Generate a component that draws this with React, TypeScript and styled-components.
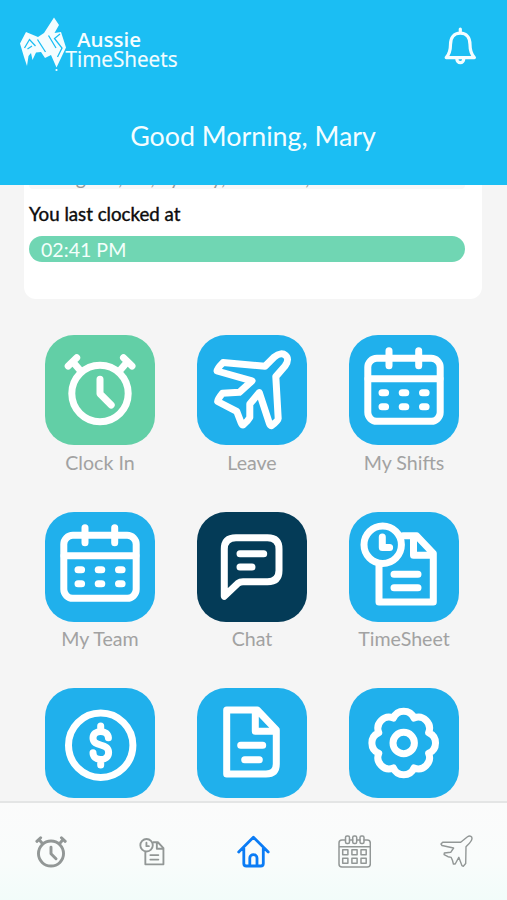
import React from "react";
import styled, { createGlobalStyle } from "styled-components";

const GlobalStyle = createGlobalStyle`
  * { box-sizing: border-box; }
  body { margin: 0; font-family: Lato, "Liberation Sans", sans-serif; background: #f5f5f5; }
`;

const Screen = styled.div`
  width: 507px;
  height: 900px;
  display: flex;
  flex-direction: column;
  overflow: hidden;
  background: #f5f5f5;
`;

const Header = styled.header`
  flex: none;
  height: 185px;
  background: #1bbef3;
  color: #f4fdff;
`;

const Brand = styled.div`
  display: flex;
  justify-content: space-between;
  align-items: flex-start;
  padding: 15px 30px 0 20px;
  height: 117px;
`;

const Logo = styled.svg`
  display: block;
  width: 162px;
  height: 60px;
`;

const BellIcon = styled.svg`
  display: block;
  width: 33px;
  height: 38px;
  margin-top: 12px;
  fill: none;
  stroke: #f4fdff;
  stroke-width: 3.2;
  stroke-linejoin: round;
  stroke-linecap: round;
`;

const Greeting = styled.h1`
  margin: 0;
  padding-right: 1px;
  font-size: 26.8px;
  line-height: 38px;
  font-weight: 400;
  text-align: center;
  white-space: nowrap;
`;

const Content = styled.main`
  flex: 1;
  min-height: 0;
  overflow: hidden;
`;

const Card = styled.section`
  height: 114px;
  margin: 0 25px 0 24px;
  padding: 0 17px 0 5px;
  background: #fff;
  border-radius: 0 0 12px 12px;
  overflow: hidden;
  display: flex;
  flex-direction: column;
`;

const Address = styled.div`
  height: 4px;
  padding-left: 11px;
  display: flex;
  align-items: flex-end;
  background: #f8f8f8;
  border-radius: 0 0 12px 12px;
  overflow: hidden;
  color: #999;
  font-size: 19.6px;
  line-height: 23px;
  white-space: pre;
`;

const CardTitle = styled.div`
  margin-top: 13px;
  height: 24px;
  font-size: 18.7px;
  line-height: 25px;
  font-weight: 400;
  color: #0c0c0c;
  -webkit-text-stroke: 0.4px #0c0c0c;
`;

const TimePill = styled.div`
  margin-top: 10px;
  height: 26px;
  padding-left: 12px;
  border-radius: 13px;
  background: #70d6b3;
  color: #f4fffb;
  font-size: 19.6px;
  line-height: 28px;
`;

const Grid = styled.div`
  display: grid;
  grid-template-columns: repeat(3, 152px);
  grid-auto-rows: 176.3px;
  justify-content: center;
  padding: 36.4px 4px 0 0;
  margin-left: 1px;
`;

const Cell = styled.div`
  display: flex;
  flex-direction: column;
  align-items: center;
`;

const Tile = styled.div<{ $color: string }>`
  width: 110px;
  height: 110px;
  border-radius: 29px;
  background: ${(p) => p.$color};
`;

const Glyph = styled.svg`
  display: block;
  width: 110px;
  height: 110px;
  fill: none;
  stroke: #fff;
  stroke-width: 7;
  stroke-linecap: round;
  stroke-linejoin: round;
`;

const Label = styled.div`
  margin-top: 5.2px;
  color: #a2a2a2;
  font-size: 19.6px;
  line-height: 24px;
`;

const NavBar = styled.nav`
  flex: none;
  height: 99px;
  display: grid;
  grid-template-columns: repeat(5, 1fr);
  align-items: center;
  justify-items: center;
  border-top: 2px solid #e4e5e5;
  background: linear-gradient(#fbfbfb, #f9fcfb 60%, #f2fcfa);
`;

const NavIcon = styled.svg<{ $weight: number; $active?: boolean }>`
  display: block;
  fill: none;
  stroke: ${(p) => (p.$active ? "#0b7cf5" : "#929796")};
  stroke-width: ${(p) => p.$weight};
  stroke-linecap: round;
  stroke-linejoin: round;
`;

const ClockShape = () => (
  <>
    <circle cx="55" cy="58.5" r="28.2" />
    <path d="M55 44.2V58.8L66.2 70M23.2 31L31.7 22.8M28.4 27.5L35.7 36M87 31L78.5 22.8M81.8 27.5L74.5 36" />
  </>
);

const PlaneShape = () => (
  <path d="M26 27.6L68 31.3L77.5 21.8C86 14.5 95 22 88 31L78.8 41.6L81.2 83.5Q81 86 74.5 90.6Q73.3 91 72.4 88.3L62.3 57.6L52.8 69V82.5Q51 86 46 90Q45 90 44.2 88L39.7 76.3L20.6 66.5Q20 65 25.5 58.3L42.3 57.3L55 45.8L20 36Q19.8 33.8 26 27.6Z" />
);

const CalendarShape = () => (
  <>
    <rect x="18.8" y="23.3" width="72.4" height="63" rx="9" />
    <path d="M19 43.8H91M40 15.7V30.8M69.7 15.7V30.8" />
    <path d="M33 57.8H36.6M53.2 57.8H56.8M73.5 57.8H77.1M33 71.8H36.6M53.2 71.8H56.8M73.5 71.8H77.1" />
  </>
);

const ChatShape = () => (
  <>
    <path d="M27.3 84.3V37Q27.3 25.7 39 25.7H70.5Q82 25.7 82 37V58.5Q82 69.7 70.5 69.7H46Q43 69.7 41 71.3Z" />
    <path d="M43 41.7H66.7M43 55H55" />
  </>
);

const SheetShape = () => (
  <>
    <circle cx="33.7" cy="32.7" r="18.7" />
    <path d="M33.3 25V35.4H40.6" />
    <path d="M30 54V90H84.3V41.3L67.7 23.8H54M64.5 24V43.2H84.3" />
    <path d="M45 62.3H69M45 75.7H69" />
  </>
);

const DollarShape = () => (
  <>
    <circle cx="55.7" cy="57.3" r="32.2" />
    <path d="M63.4 49.8C63.2 46 60 43.4 55.7 43.4C51.3 43.4 48 46 48 50C48 59.6 63.6 54.4 63.6 64.4C63.6 68.6 60 71.5 55.7 71.5C51.3 71.5 48 68.6 48 64.7M55.7 38V43M55.7 72V77" />
  </>
);

const FileShape = () => (
  <>
    <path d="M29.7 22H60.3L79.3 42V76Q79.3 86 69 86H29.7ZM58.3 23V43.3H78" />
    <path d="M43.7 57.3H65.7M47.7 71.7H62.3" />
  </>
);

const GearShape = () => (
  <g transform="translate(54.7 55)">
    <circle r="10.7" />
    <path d="M24.94 -10.33A11.2 11.2 0 0 1 24.94 10.33A11.2 11.2 0 0 1 10.33 24.94A11.2 11.2 0 0 1 -10.33 24.94A11.2 11.2 0 0 1 -24.94 10.33A11.2 11.2 0 0 1 -24.94 -10.33A11.2 11.2 0 0 1 -10.33 -24.94A11.2 11.2 0 0 1 10.33 -24.94A11.2 11.2 0 0 1 24.94 -10.33Z" />
  </g>
);

const BLUE = "#20b0ec";

const tiles = [
  { label: "Clock In", color: "#62cfa6", Shape: ClockShape },
  { label: "Leave", color: BLUE, Shape: PlaneShape },
  { label: "My Shifts", color: BLUE, Shape: CalendarShape },
  { label: "My Team", color: BLUE, Shape: CalendarShape },
  { label: "Chat", color: "#043b57", Shape: ChatShape },
  { label: "TimeSheet", color: BLUE, Shape: SheetShape },
  { label: "", color: BLUE, Shape: DollarShape },
  { label: "", color: BLUE, Shape: FileShape },
  { label: "", color: BLUE, Shape: GearShape },
];

export default function App() {
  return (
    <Screen>
      <GlobalStyle />
      <Header>
        <Brand>
          <Logo viewBox="0 0 162 60">
            <path
              fill="#f4fdff"
              d="M0 28.5L6 17L18 22L24 18L34 2.5L39 10L34.5 18L41 17L46 32.5L36.5 52.5L31 40L25 43L21 37L16 37.5L12.5 45L11 38L8.5 41L7 51L4 42Z"
            />
            <path
              fill="none"
              stroke="#1bbef3"
              strokeWidth="1.3"
              d="M4.5 33L9.5 24.5L15.5 31M7.5 34L12 31M17.5 24.5L25.5 37M28.5 20.5L36 33M40 19L34.5 23.5L42 33L37.5 42"
            />
            <circle cx="36.5" cy="55" r="1.1" fill="#f4fdff" />
            <g fill="#f4fdff" fontFamily='"Open Sans", "Noto Sans", sans-serif'>
              <text x="57" y="31.5" fontSize="20" fontWeight="600" textLength="64" lengthAdjust="spacingAndGlyphs">Aussie</text>
              <text x="45.5" y="52" fontSize="22" textLength="112" lengthAdjust="spacingAndGlyphs" stroke="#f4fdff" strokeWidth="0.2">TimeSheets</text>
            </g>
          </Logo>
          <BellIcon viewBox="0 0 33 38">
            <path d="M2.2 30.6C5.5 27 6.5 24 6.5 17.5C6.5 10.5 10 6.2 16.3 6.2C22.5 6.2 26 10.5 26 17.5C26 24 27 27 30.4 30.6ZM16.3 2V6" />
            <path d="M12.8 31.5C12.8 37 19.8 37 19.8 31.5" />
          </BellIcon>
        </Brand>
        <Greeting>Good Morning, Mary</Greeting>
      </Header>
      <Content>
        <Card>
          <Address>Wing Sta, Rd, Sydney, Australia,</Address>
          <CardTitle>You last clocked at</CardTitle>
          <TimePill>02:41 PM</TimePill>
        </Card>
        <Grid>
          {tiles.map(({ label, color, Shape }, i) => (
            <Cell key={i}>
              <Tile $color={color}>
                <Glyph viewBox="0 0 110 110"><Shape /></Glyph>
              </Tile>
              {label && <Label>{label}</Label>}
            </Cell>
          ))}
        </Grid>
      </Content>
      <NavBar>
        <NavIcon $weight={6.6} width="32" height="32" viewBox="19 19 72 72"><ClockShape /></NavIcon>
        <NavIcon $weight={5.6} width="26" height="28" viewBox="11 11 78 84"><SheetShape /></NavIcon>
        <NavIcon $weight={2.8} $active width="33" height="33" viewBox="0 0 33 33">
          <path d="M1.7 17L16.4 2.2L31.2 17M6.8 13V28.5Q6.8 31 9.3 31H23.8Q26.3 31 26.3 28.5V13M12.8 30.5V23C12.8 18.5 20 18.5 20 23V30.5" />
        </NavIcon>
        <NavIcon $weight={1.5} width="33" height="33" viewBox="0 0 33 33">
          <path d="M7.5 5H4Q1 5 1 8V29Q1 32 4 32H29.3Q32.3 32 32.3 29V8Q32.3 5 29.3 5H26M11.5 5H14.7M18.7 5H22M1 11.7H32.3" />
          <rect x="7.5" y="1" width="4" height="7.4" rx="1.5" />
          <rect x="14.7" y="1" width="4" height="7.4" rx="1.5" />
          <rect x="22" y="1" width="4" height="7.4" rx="1.5" />
          <path d="M4.7 14.8h5.2v5h-5.2ZM13.9 14.8h5.2v5h-5.2ZM23 14.8h5.2v5h-5.2ZM4.7 23.2h5.2v5h-5.2ZM13.9 23.2h5.2v5h-5.2ZM23 23.2h5.2v5h-5.2Z" />
        </NavIcon>
        <NavIcon $weight={1.4} width="33" height="33" viewBox="0 0 33 33">
          <path d="M1 9L2.7 7.2L20.7 7.3L27.5 1.8C30 0 32.6 1.5 31.8 4.3C31.2 6.8 28.5 9 26 11.7L25.7 28.5L23.3 31.3L22 30.7L18.8 22.3L15.2 29L13.4 29L12.5 25.5L11.2 22.4L8 21.7L4.1 19.7L4.3 18L10.7 17.3L13.6 13L2 10.5Z" />
        </NavIcon>
      </NavBar>
    </Screen>
  );
}
